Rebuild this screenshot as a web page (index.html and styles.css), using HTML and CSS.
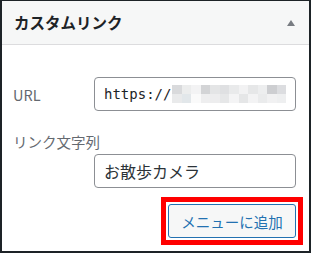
FILE: index.html
```html
<!DOCTYPE html>
<html lang="ja">
<head>
    <meta charset="UTF-8">
    <meta name="viewport" content="width=device-width, initial-scale=1.0">
    <title>カスタムリンク</title>
    <link rel="stylesheet" href="styles.css">
</head>
<body>
    <div class="postbox">
        <div class="postbox-header">
            <h3 class="hndle">カスタムリンク</h3>
            <span class="toggle-indicator"></span>
        </div>
        <div class="inside">
            <div class="field-row">
                <label class="field-label" for="custom-url">URL</label>
                <div class="text-input url-input" id="custom-url">
                    <span class="url-text">https://</span>
                    <span class="mosaic">
                        <i style="background:#d9dadc"></i><i style="background:#eceded"></i><i style="background:#f3f3f4"></i><i style="background:#d3d4d6"></i><i style="background:#e4e5e6"></i><i style="background:#dfe0e2"></i><i style="background:#e9eaeb"></i><i style="background:#f2f2f3"></i><i style="background:#e6e7e8"></i><i style="background:#edeeef"></i><i style="background:#cdced1"></i><i style="background:#dcdde0"></i>
                        <i style="background:#e9eaeb"></i><i style="background:#e2e7ea"></i><i style="background:#fafafa"></i><i style="background:#eeeeef"></i><i style="background:#ededee"></i><i style="background:#e6e7e8"></i><i style="background:#f4f4f5"></i><i style="background:#e5e6e7"></i><i style="background:#f3f3f4"></i><i style="background:#eaebec"></i><i style="background:#f1f1f2"></i><i style="background:#eeeff0"></i>
                    </span>
                </div>
            </div>
            <label class="field-label block-label" for="custom-text">リンク文字列</label>
            <div class="field-row indent">
                <div class="text-input" id="custom-text">お散歩カメラ</div>
            </div>
            <div class="button-row">
                <span class="highlight">
                    <button class="button">メニューに追加</button>
                </span>
            </div>
        </div>
    </div>
</body>
</html>
```

FILE: styles.css
```css
body {
    margin: 0;
    background-color: #fff;
    font-family: "Noto Sans CJK JP", "Noto Sans", sans-serif;
}
.postbox {
    width: 311px;
    height: 253px;
    box-sizing: border-box;
    border: 2px solid #1d2327;
    border-top-width: 1px;
    background-color: #fff;
}
.postbox-header {
    height: 43px;
    background-color: #f6f7f7;
    border-bottom: 1px solid #dcdcde;
    display: flex;
    align-items: center;
    justify-content: space-between;
    padding: 0 14px 0 12px;
}
.hndle {
    margin: 0;
    font-size: 15.5px;
    font-weight: bold;
    color: #1d2327;
    line-height: 1;
}
.toggle-indicator {
    width: 0;
    height: 0;
    border-left: 4.5px solid transparent;
    border-right: 4.5px solid transparent;
    border-bottom: 6px solid #787c82;
}
.inside {
    padding: 32px 13px 0 11px;
}
.field-row {
    display: flex;
    align-items: center;
}
.field-label {
    width: 81px;
    font-size: 14.5px;
    color: #646970;
}
.block-label {
    display: block;
    width: auto;
    margin-top: 19px;
    line-height: 24px;
}
.indent {
    padding-left: 81px;
}
.text-input {
    width: 202px;
    height: 34px;
    box-sizing: border-box;
    border: 1px solid #8c8f94;
    border-radius: 4px;
    padding: 0 9px;
    display: flex;
    align-items: center;
    font-size: 16px;
    color: #2c3338;
    overflow: hidden;
    white-space: nowrap;
}
.url-input {
    font-family: "DejaVu Sans Mono", "Liberation Mono", monospace;
    font-size: 14px;
    color: #1d2327;
}
.mosaic {
    display: grid;
    grid-template-columns: repeat(12, 9.5px);
    grid-template-rows: repeat(2, 9px);
    margin-left: 1px;
}
.mosaic i {
    display: block;
}
.button-row {
    display: flex;
    justify-content: flex-end;
    margin-top: 9px;
    margin-right: -7px;
}
.highlight {
    display: flex;
    border: 5px solid #ff0000;
    padding: 2px;
}
.button {
    width: 128px;
    height: 34px;
    border: 1px solid #2271b1;
    border-radius: 3px;
    background-color: #f6f7f7;
    color: #2271b1;
    font-family: "Noto Sans CJK JP", "Noto Sans", sans-serif;
    font-size: 14.5px;
    cursor: pointer;
    padding: 0;
}
```
